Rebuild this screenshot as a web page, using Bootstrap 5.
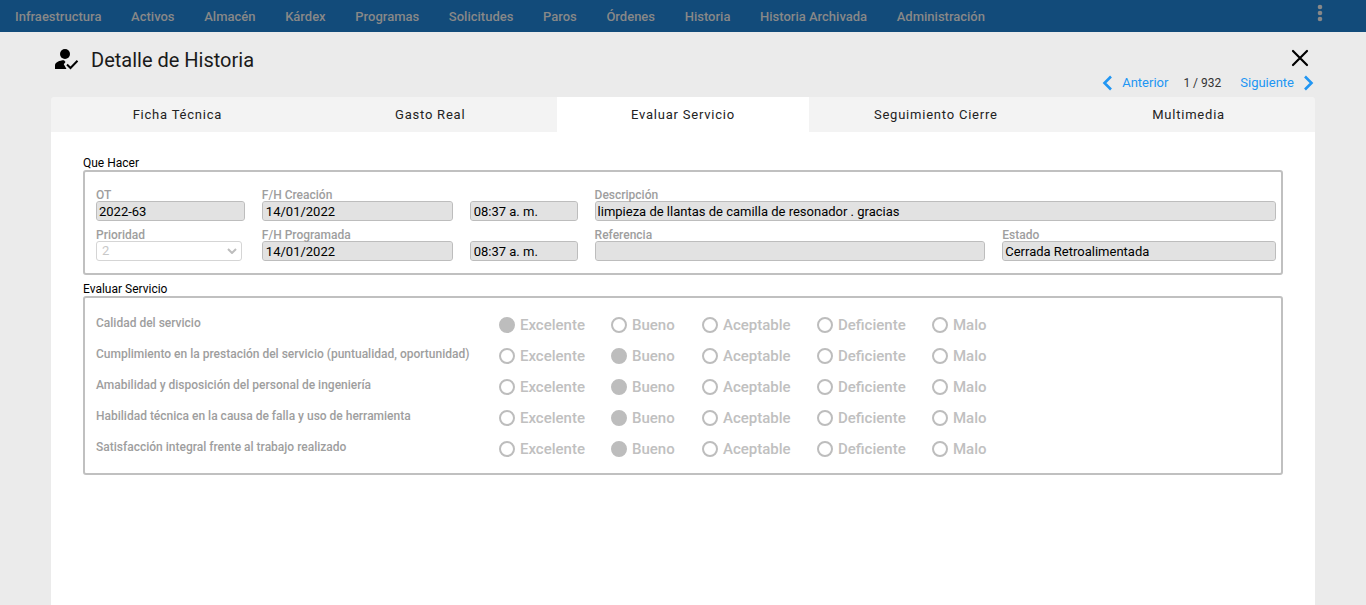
<!DOCTYPE html>
<html lang="es">
<head>
<meta charset="utf-8">
<meta name="viewport" content="width=device-width, initial-scale=1">
<title>Detalle de Historia</title>
<link href="https://cdn.jsdelivr.net/npm/bootstrap@5.3.0/dist/css/bootstrap.min.css" rel="stylesheet">
<style>
  body { font-family: Roboto, "Liberation Sans", sans-serif; font-size: 13px; line-height: 16px; color: #000; background: #ebebeb; }
  .topbar { background: #124b7a; height: 32px; padding: 0 40px 0 15px; }
  .topbar a { color: #888; font-weight: 500; text-decoration: none; white-space: nowrap; }
  .topbar .menu-links { flex: 0 0 74%; gap: 0 16px; padding-top: 2px; }
  .icon-btn { background: none; border: 0; padding: 0; line-height: 0; color: inherit; }
  .topbar .icon-btn { color: #888; padding: 0 0 6px; }
  .detail { margin: 0 51px; }
  .detail-head { height: 65px; }
  .detail-title { gap: 12px; padding: 13px 0 0 2px; }
  .detail-title h1 { font-size: 20px; line-height: 30px; font-weight: 400; margin: 0; color: #1a1a1a; }
  .detail-close { padding: 17px 1px 0 0; }
  .detail-close > .icon-btn { margin-right: 4px; }
  .pager { gap: 15px; margin-top: 8px; line-height: 16px; }
  .pager a { color: #2196f3; text-decoration: none; gap: 10px; }
  .pager span { font-size: 12px; color: #333; padding-right: 4px; }
  .detail-tabs { background: #f3f3f3; border-radius: 3px 3px 0 0; overflow: hidden; }
  .detail-tabs .nav-link { border-radius: 0; padding: 0; line-height: 35px; letter-spacing: .06em; color: #222; }
  .detail-tabs .nav-link.active { background: #fff; color: #222; }
  .panel { background: #fff; padding: 24px 32px 32px; min-height: calc(100vh - 129px); }
  .group-title { font-size: 12px; line-height: 14px; font-weight: 400; margin: 0; }
  .group-box { border: 2px solid #c0c0c0; border-radius: 3px; }
  .group-box + .group-title { margin-top: 7px; }
  .fields { display: grid; grid-template-columns: 149fr 191fr 108fr 391fr 274fr; gap: 0 17px; padding: 16px 5px 12px 11px; }
  .caption { font-size: 12px; font-weight: 500; color: #9e9e9e; }
  .fields label { display: block; line-height: 14px; height: 13px; margin-bottom: 0; }
  .field { padding-bottom: 7px; }
  .field:nth-last-child(-n+5) { padding-bottom: 0; }
  .field .form-control, .field .form-select { height: 20px; min-height: 20px; border: 1px solid #bdbdbd; border-radius: 3px; font-size: 13px; line-height: 18px; padding: 0 2px; background-color: #e2e2e2; color: #000; opacity: 1; }
  .field .stamp { padding-left: 3px; }
  .field .form-select { width: auto; min-width: 146px; padding-left: 5px; background-color: #fff; border-color: #d5d5d5; color: #c8c8c8;
    background-image: url("data:image/svg+xml,%3csvg xmlns='http://www.w3.org/2000/svg' viewBox='0 0 10 6'%3e%3cpath fill='none' stroke='%23bdbdbd' stroke-width='2' d='M1 1l4 4 4-4'/%3e%3c/svg%3e"); background-size: 10px 6px; background-position: right 4px center; }
  .wide { grid-column: span 2; }
  .ratings { padding: 11px 11px 9px; }
  .rating { display: grid; grid-template-columns: 403px 1fr; height: 31px; align-items: center; }
  .rating .caption { padding-bottom: 3px; }
  .choices { display: grid; grid-template-columns: 112px 91px 115px 115px auto; justify-content: start; }
  .choice { display: flex; align-items: center; gap: 5px; font-size: 15px; font-weight: 500; line-height: 18px; color: #c0c0c0; }
  .choice .form-check-input { width: 16px; height: 16px; margin: 0; border: 2px solid #bdbdbd; background-color: #fff; background-image: none; opacity: 1; flex: none; }
  .choice .form-check-input:checked { background-color: #bdbdbd; background-image: none; }
</style>
</head>
<body>
<nav class="topbar d-flex align-items-center justify-content-between" aria-label="Principal">
  <div class="menu-links d-flex justify-content-between">
    <a href="#">Infraestructura</a><a href="#">Activos</a><a href="#">Almacén</a><a href="#">Kárdex</a><a href="#">Programas</a><a href="#">Solicitudes</a><a href="#">Paros</a><a href="#">Órdenes</a><a href="#">Historia</a><a href="#">Historia Archivada</a><a href="#">Administración</a>
  </div>
  <button class="icon-btn" type="button" aria-label="Más opciones"><svg width="12" height="18" viewBox="0 0 12 18" fill="currentColor"><circle cx="6" cy="3" r="2.3"/><circle cx="6" cy="9" r="2.3"/><circle cx="6" cy="15" r="2.3"/></svg></button>
</nav>

<main class="detail">
  <header class="detail-head d-flex justify-content-between">
    <div class="detail-title d-flex align-items-start">
      <svg width="26" height="28" viewBox="0 0 26 28" aria-hidden="true"><circle cx="12" cy="9" r="5"/><path d="M2 24v-3.500c0-3 4.500-5.200 9-5.200L12.500 17l-1.700 2.200 2.700 4.800z"/><path d="M14 19.500l3.500 3.500 7-7.200" fill="none" stroke="#000" stroke-width="2"/></svg>
      <h1>Detalle de Historia</h1>
    </div>
    <div class="detail-close d-flex flex-column align-items-end">
      <button class="icon-btn" type="button" aria-label="Cerrar"><svg width="20" height="18" viewBox="0 0 20 18" fill="none" stroke="#000" stroke-width="2.200" stroke-linecap="round"><path d="M3 2l14 14M17 2L3 16"/></svg></button>
      <div class="pager d-flex align-items-center">
        <a class="d-flex align-items-center" href="#"><svg width="10" height="16" viewBox="0 0 10 16" fill="none" stroke="currentColor" stroke-width="2.600"><path d="M9 1.500L2.500 8 9 14.500"/></svg>Anterior</a>
        <span>1 / 932</span>
        <a class="d-flex align-items-center" href="#">Siguiente<svg width="10" height="16" viewBox="0 0 10 16" fill="none" stroke="currentColor" stroke-width="2.600"><path d="M1 1.500L7.500 8 1 14.500"/></svg></a>
      </div>
    </div>
  </header>

  <div class="detail-tabs nav nav-pills nav-justified" role="tablist">
    <button class="nav-link nav-item" type="button" role="tab">Ficha Técnica</button>
    <button class="nav-link nav-item" type="button" role="tab">Gasto Real</button>
    <button class="nav-link nav-item active" type="button" role="tab" aria-selected="true">Evaluar Servicio</button>
    <button class="nav-link nav-item" type="button" role="tab">Seguimiento Cierre</button>
    <button class="nav-link nav-item" type="button" role="tab">Multimedia</button>
  </div>

  <section class="panel">
    <h2 class="group-title">Que Hacer</h2>
    <div class="group-box fields">
      <div class="field"><label class="caption" for="ot">OT</label><input class="form-control" id="ot" value="2022-63" disabled></div>
      <div class="field"><label class="caption" for="fc">F/H Creación</label><input class="form-control stamp" id="fc" value="14/01/2022" disabled></div>
      <div class="field"><label for="hc" aria-label="Hora de creación"></label><input class="form-control stamp" id="hc" value="08:37 a. m." disabled></div>
      <div class="field wide"><label class="caption" for="de">Descripción</label><input class="form-control" id="de" value="limpieza de llantas de camilla de resonador . gracias" disabled></div>
      <div class="field"><label class="caption" for="pr">Prioridad</label><select class="form-select" id="pr" disabled><option>2</option></select></div>
      <div class="field"><label class="caption" for="fp">F/H Programada</label><input class="form-control stamp" id="fp" value="14/01/2022" disabled></div>
      <div class="field"><label for="hp" aria-label="Hora programada"></label><input class="form-control stamp" id="hp" value="08:37 a. m." disabled></div>
      <div class="field"><label class="caption" for="re">Referencia</label><input class="form-control" id="re" disabled></div>
      <div class="field"><label class="caption" for="es">Estado</label><input class="form-control" id="es" value="Cerrada Retroalimentada" disabled></div>
    </div>

    <h2 class="group-title">Evaluar Servicio</h2>
    <div class="group-box ratings" id="ratings"></div>
  </section>
</main>

<script src="https://cdn.jsdelivr.net/npm/bootstrap@5.3.0/dist/js/bootstrap.bundle.min.js"></script>
<script>
  const options = ['Excelente', 'Bueno', 'Aceptable', 'Deficiente', 'Malo'];
  const questions = [
    ['Calidad del servicio', 0],
    ['Cumplimiento en la prestación del servicio (puntualidad, oportunidad)', 1],
    ['Amabilidad y disposición del personal de ingeniería', 1],
    ['Habilidad técnica en la causa de falla y uso de herramienta', 1],
    ['Satisfacción integral frente al trabajo realizado', 1]
  ];
  document.getElementById('ratings').innerHTML = questions.map(([text, answer], q) => `
    <div class="rating" role="radiogroup" aria-labelledby="q${q}">
      <div class="caption" id="q${q}">${text}</div>
      <div class="choices">${options.map((name, i) => `
        <label class="choice" for="q${q}o${i}"><input class="form-check-input" type="radio" name="q${q}" id="q${q}o${i}" disabled${i === answer ? ' checked' : ''}>${name}</label>`).join('')}
      </div>
    </div>`).join('');
</script>
</body>
</html>
